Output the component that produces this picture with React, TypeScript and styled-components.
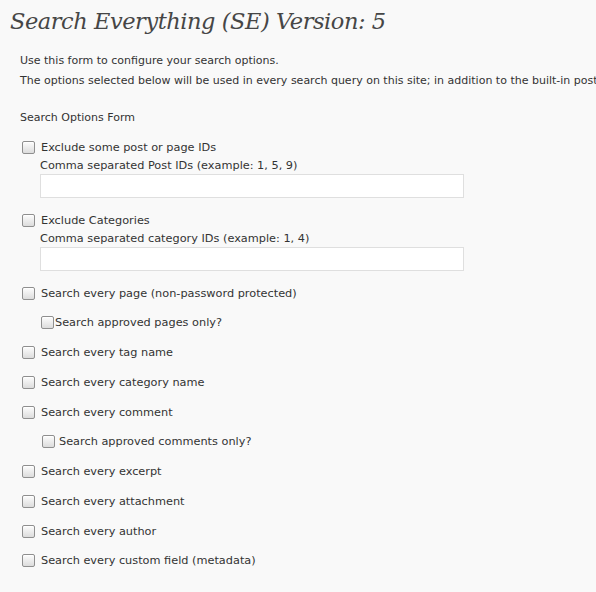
import * as React from 'react';
import styled, { createGlobalStyle } from 'styled-components';

const GlobalStyle = createGlobalStyle`
  html, body {
    margin: 0;
    padding: 0;
    background: #f9f9f9;
  }
  body {
    font-family: "DejaVu Sans", "Liberation Sans", sans-serif;
    font-size: 11px;
    color: #333;
  }
`;

const Wrap = styled.div`
  width: 596px;
  height: 592px;
  overflow: hidden;
  padding: 0 0 0 10px;
  box-sizing: border-box;
  white-space: nowrap;
`;

const Title = styled.h2`
  margin: 0;
  padding: 6px 0 0 0;
  font-family: Georgia, "DejaVu Serif", serif;
  font-style: italic;
  font-weight: normal;
  font-size: 22.5px;
  line-height: 30px;
  color: #464646;
  letter-spacing: -0.45px;
`;

const Intro = styled.div`
  padding: 15px 0 0 10px;
`;

const Para = styled.p`
  margin: 0;
  line-height: 20px;
`;

const FormLabel = styled.p`
  margin: 17px 0 0 0;
  line-height: 20px;
`;

const Options = styled.div`
  display: flex;
  flex-direction: column;
  padding: 10px 0 0 12px;
  font-size: 11.3px;
`;

const Row = styled.label<{ $indent?: number; $gap?: number }>`
  display: flex;
  align-items: center;
  height: 20px;
  margin-bottom: 9.75px;
  padding-left: ${(p) => p.$indent ?? 0}px;
  gap: ${(p) => p.$gap ?? 6}px;
`;

const Box = styled.span`
  display: inline-block;
  width: 11px;
  height: 11px;
  border: 1px solid #8f8f8f;
  border-radius: 2px;
  background: linear-gradient(#fdfdfd, #dcdcdc);
  box-shadow: inset 0 1px 0 #fff;
  flex: none;
`;

const Group = styled.div<{ $space: number }>`
  display: flex;
  flex-direction: column;
  margin-bottom: ${(p) => p.$space}px;
`;

const GroupHead = styled(Row)`
  margin-bottom: 0;
  height: 18px;
`;

const Hint = styled.div`
  padding: 2px 0 0 18px;
  line-height: 16px;
`;

const TextInput = styled.input`
  margin: 0 0 0 18px;
  width: 424px;
  height: 24px;
  box-sizing: border-box;
  border: 1px solid #dfdfdf;
  border-radius: 0;
  background: #fff;
  font: inherit;
  outline: none;
`;

const Check = ({ children, indent, gap }: { children: React.ReactNode; indent?: number; gap?: number }) => (
  <Row $indent={indent} $gap={gap}>
    <Box />
    <span>{children}</span>
  </Row>
);

export default function App() {
  return (
    <Wrap>
      <GlobalStyle />
      <Title>Search Everything (SE) Version: 5</Title>
      <Intro>
        <Para>Use this form to configure your search options.</Para>
        <Para>
          The options selected below will be used in every search query on this site; in addition to the built-in post search.
        </Para>
        <FormLabel>Search Options Form</FormLabel>
      </Intro>
      <Options>
        <Group $space={13}>
          <GroupHead>
            <Box />
            <span>Exclude some post or page IDs</span>
          </GroupHead>
          <Hint>Comma separated Post IDs (example: 1, 5, 9)</Hint>
          <TextInput type="text" />
        </Group>
        <Group $space={12}>
          <GroupHead>
            <Box />
            <span>Exclude Categories</span>
          </GroupHead>
          <Hint>Comma separated category IDs (example: 1, 4)</Hint>
          <TextInput type="text" />
        </Group>
        <Check>Search every page (non-password protected)</Check>
        <Check indent={19} gap={1}>Search approved pages only?</Check>
        <Check>Search every tag name</Check>
        <Check>Search every category name</Check>
        <Check>Search every comment</Check>
        <Check indent={20} gap={4}>Search approved comments only?</Check>
        <Check>Search every excerpt</Check>
        <Check>Search every attachment</Check>
        <Check>Search every author</Check>
        <Check>Search every custom field (metadata)</Check>
      </Options>
    </Wrap>
  );
}
